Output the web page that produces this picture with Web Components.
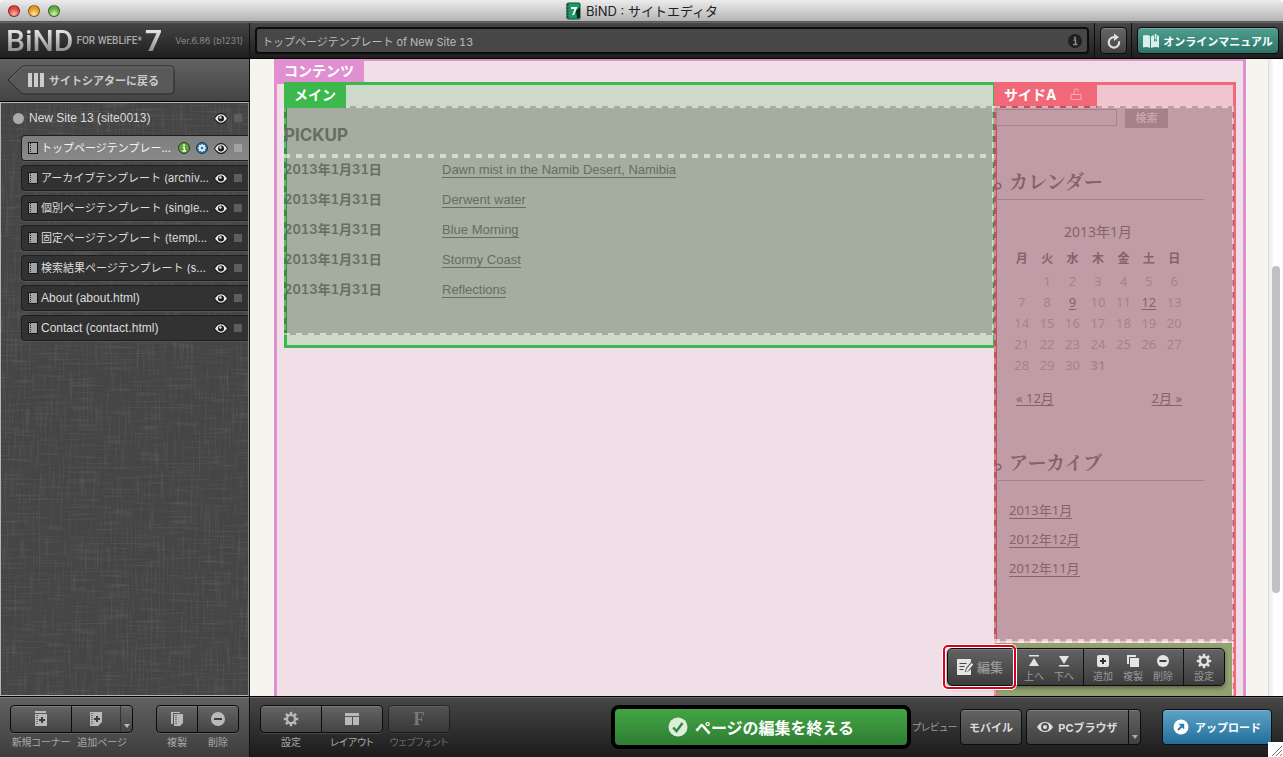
<!DOCTYPE html>
<html lang="ja">
<head>
<meta charset="utf-8">
<title>BiND : サイトエディタ</title>
<style>
  html, body { margin: 0; height: 100%; }
  body {
    font-family: Inter, "Noto Sans CJK JP", sans-serif;
    font-size: 11px;
    color: #ddd;
    background: #333;
    overflow: hidden;
  }
</style>
</head>
<body>
<site-editor></site-editor>

<script>
const RESET = `
  *, *::before, *::after { box-sizing: border-box; }
  :host { display: block; box-sizing: border-box; }
  :host([hidden]) { display: none; }
  button { font: inherit; color: inherit; margin: 0; padding: 0; border: 0; background: none; }
  a { color: inherit; text-decoration: none; }
  ul { list-style: none; margin: 0; padding: 0; }
  h1, h2, h3 { margin: 0; }
`;

function component(tag, css, html) {
  const template = document.createElement('template');
  template.innerHTML = `<style>${RESET}${css}</style>${html}`;
  customElements.define(tag, class extends HTMLElement {
    constructor() {
      super();
      this.attachShadow({ mode: 'open' }).append(template.content.cloneNode(true));
    }
  });
}

/* ---------- icons ---------- */
const gear = (cx, cy, r, hole) => {
  let teeth = '';
  for (let i = 0; i < 8; i++) {
    teeth += `<rect x="${cx - r * 0.17}" y="${cy - r}" width="${r * 0.34}" height="${r * 0.5}" transform="rotate(${i * 45} ${cx} ${cy})"/>`;
  }
  return `${teeth}<circle cx="${cx}" cy="${cy}" r="${(r * 0.72 + hole) / 2}" fill="none" stroke="currentColor" stroke-width="${r * 0.72 - hole}"/>`;
};

const ICONS = {
  book: [16, 18, `<rect x="2" y="1" width="13" height="16" rx="1" fill="#1d9a62" stroke="#0c5636"/><path d="M11 9l4-4v11h-3z" fill="#0a2a1b"/><path d="M1 3h3M1 6h3M1 9h3M1 12h3M1 15h3" stroke="#333" stroke-width="1.200"/><path d="M6 6h5l-3 7" fill="none" stroke="#fff" stroke-width="1.800"/>`],
  bars: [16, 14, `<rect width="4" height="14"/><rect x="6" width="4" height="14"/><rect x="12" width="4" height="14"/>`],
  page: [10, 12, `<rect x="0.500" y="0.500" width="9" height="11" fill="#a2a2a2" stroke="#161616"/><path d="M2.500 1v10" stroke="#1c1c1c" stroke-dasharray="1 1"/>`],
  eye: [14, 11, `<path d="M0 5.500C2.500 1 4.800 0 7 0s4.500 1 7 5.500C11.500 10 9.200 11 7 11S2.500 10 0 5.500z" fill="#1b1b1b"/><path d="M1 5.500C3.200 2.200 5 1.300 7 1.300s3.800.9 6 4.200C10.800 8.800 9 9.700 7 9.700S3.200 8.800 1 5.500z" fill="#e8e8e8"/><circle cx="7" cy="5.500" r="3" fill="#1b1b1b"/><circle cx="6.400" cy="4.500" r="1.200" fill="#e8e8e8"/>`],
  view: [16, 12, `<path d="M0 6C3 1.600 5.500 1 8 1s5 .6 8 5c-3 4.400-5.500 5-8 5S3 10.400 0 6z"/><circle cx="8" cy="6" r="3.900" fill="#4b4b4b"/><circle cx="8" cy="6" r="2.100"/>`],
  info: [12, 12, `<circle cx="6" cy="6" r="5.500" fill="#5fa33a" stroke="#28401a"/><path d="M4.700 5.300h1.700v3.500M4.500 9h3.500" fill="none" stroke="#fff" stroke-width="1.300"/><rect x="5.100" y="2.300" width="1.800" height="1.600" fill="#fff"/>`],
  globe: [12, 12, `<circle cx="6" cy="6" r="5.500" fill="#2f7aa6" stroke="#17384c"/><g color="#fff" fill="#fff">${gear(6, 6, 3.9, 1.5)}</g>`],
  about: [14, 14, `<circle cx="7" cy="7" r="7" fill="#1f1f1f"/><path d="M5.500 6h2v4.500M5 10.500h4.500" fill="none" stroke="#8a8a8a" stroke-width="1.500"/><rect x="6" y="2.800" width="2" height="1.900" fill="#8a8a8a"/>`],
  reload: [14, 16, `<path d="M12 8.200A5.200 5.200 0 1 1 7.500 4.200" fill="none" stroke="currentColor" stroke-width="2.200"/><path d="M7 .5l5 3.800L7 8z"/>`],
  manual: [16, 14, `<path d="M0 1.500c2.500-.8 5-.8 7 .5V14c-2-1.200-4.500-1.200-7-.4zM8 2.500C9 1.600 10 1.300 11 1.200V8l1.500-1.700L14 8V1.200c.8 0 1.400.3 2 .6v11.800c-2.500-.8-5-.8-8 .4z"/><path d="M11.700 0h1.700v6l-.9-1-.8 1z"/>`],
  lock: [12, 13, `<rect x="1" y="6.500" width="10" height="5" fill="none" stroke="currentColor"/><path d="M4 6V3a2 2 0 0 1 4-.5V4" fill="none" stroke="currentColor"/>`],
  corner: [14, 16, `<path d="M1 0h11v2H1z"/><path d="M1 3h12v12H1z"/><path d="M3 4v10" stroke="#333" stroke-dasharray="1 1"/><path d="M8 6v6M5 9h6" stroke="#3c3c3c" stroke-width="2"/>`],
  addpage: [14, 16, `<path d="M1 1h12v10l-4 4H1z"/><path d="M3 2v12" stroke="#333" stroke-dasharray="1 1"/><path d="M8 5v6M5 8h6" stroke="#3c3c3c" stroke-width="2"/>`],
  copy: [14, 16, `<path d="M1 1h9v1H3v11H1z"/><path d="M4 3h9v9l-3 3H4z"/><path d="M6 4v10" stroke="#333" stroke-dasharray="1 1"/>`],
  minus: [16, 16, `<circle cx="8" cy="8" r="7"/><path d="M4 8h8" stroke="#3c3c3c" stroke-width="2"/>`],
  remove: [12, 12, `<circle cx="6" cy="6" r="6"/><path d="M2.500 6h7" stroke="#3c3c3c" stroke-width="2"/>`],
  gear: [16, 16, gear(8, 8, 7.2, 2.9)],
  layout: [16, 14, `<path d="M1 1h14v3H1zM1 5h7v8H1zM9 5h6v8H9z"/>`],
  check: [20, 20, `<circle cx="10" cy="10" r="9.500"/><path d="M5.200 10.500l3.300 3.700L14.500 6" fill="none" stroke="#2f8a34" stroke-width="2.400"/>`],
  upload: [16, 16, `<circle cx="8" cy="8" r="7.500"/><path d="M5 11l4-4" stroke="#2f7dab" stroke-width="2.200"/><path d="M5.500 4.800h5.700v5.700z" fill="#2f7dab"/>`],
  caret: [6, 4, `<path d="M0 0h6L3 4z"/>`],
  edit: [16, 16, `<path d="M0 0h14v3l-5 6-1 4 4-1 2-2v6H0z"/><path d="M2.500 4.500h7M2.500 7.500h5M2.500 10.500h4" stroke="#444" stroke-width="1.200"/><path d="M9 13l.6-3.200 5-5.800 1.600 1.500-4.800 6z"/>`],
  up: [12, 12, `<path d="M1 0h10v1.500H1zM6 3l5 8H1z"/>`],
  down: [12, 12, `<path d="M1 10h10v1.500H1zM6 9l5-8H1z"/>`],
  plus: [12, 12, `<rect width="12" height="12" rx="2"/><path d="M6 3v6M3 6h6" stroke="#333" stroke-width="2"/>`],
  dup: [12, 12, `<path d="M0 0h9v2H2v7H0z"/><path d="M3 3h9v9H3z"/>`],
  grip: [15, 15, `<rect width="15" height="15" fill="#fff"/><path d="M4 14L14 4M8 14l6-6M12 14l2-2" stroke="#777"/>`],
  back: [168, 30, `<path d="M1 15L14 2.500Q15.500 1 18 1H163q4 0 4 4v20q0 4-4 4H18q-2.500 0-4-1.500z" fill="#595959" stroke="#262626"/><path d="M2.500 15L15 3Q16 2 18 2H163q3 0 3 3" fill="none" stroke="#707070"/>`],
};

customElements.define('ui-icon', class extends HTMLElement {
  constructor() {
    super();
    this.attachShadow({ mode: 'open' });
  }
  connectedCallback() {
    const [w, h, shape] = ICONS[this.getAttribute('name')];
    this.shadowRoot.innerHTML = `
      <style>:host{display:block;flex:none;width:${w}px;height:${h}px}svg{display:block}</style>
      <svg width="${w}" height="${h}" viewBox="0 0 ${w} ${h}" fill="currentColor" aria-hidden="true">${shape}</svg>`;
  }
});

/* ---------- window title ---------- */
component('title-bar', `
  :host {
    height: 22px; display: flex; align-items: center; justify-content: center; gap: 5px;
    position: relative; color: #222; font-size: 13px;
    background: linear-gradient(#ececec, #b4b4b4); border-bottom: 1px solid #555;
    border-radius: 4px 4px 0 0;
  }
  .lights { position: absolute; left: 8px; top: 5px; display: flex; gap: 8px; }
  i { width: 12px; height: 12px; border-radius: 50%; border: 1px solid rgba(0,0,0,.45); }
  .r { background: radial-gradient(circle at 50% 80%, #ffb6ae, #e0443e 60%); }
  .y { background: radial-gradient(circle at 50% 80%, #ffeaa0, #e59a24 60%); }
  .g { background: radial-gradient(circle at 50% 80%, #d3f5b0, #61ab3f 60%); }
  h1 { font-size: 13px; font-weight: 400; line-height: 20px; }
`, `
  <div class="lights"><i class="r"></i><i class="y"></i><i class="g"></i></div>
  <ui-icon name="book"></ui-icon>
  <h1><slot></slot></h1>
`);

/* ---------- top bar ---------- */
component('brand-logo', `
  :host {
    display: flex; align-items: center; padding: 0 6px; font-family: Roboto, sans-serif;
    width: 250px; flex: none; border-right: 1px solid #111; white-space: nowrap;
  }
  .big {
    font-size: 30px; font-weight: 500; line-height: 36px;
    background: linear-gradient(#e6e6e6 20%, #8d8d8d 80%); background-clip: text; -webkit-background-clip: text; color: transparent;
  }
  .seven { font-weight: 700; }
  .sub { font-size: 10px; font-weight: 500; color: #aaa; margin: 0 3px; }
  .ver { font-family: Inter, sans-serif; font-size: 9px; color: #888; margin-left: auto; }
`, `
  <span class="big">BiND</span><span class="sub">FOR WEBLiFE*</span><span class="big seven">7</span>
  <span class="ver"><slot></slot></span>
`);

component('top-bar', `
  :host {
    display: flex; height: 37px; flex: none;
    background: linear-gradient(#454545, #1e1e1e); border-top: 1px solid #666; border-bottom: 1px solid #000;
  }
  .address {
    flex: 1; display: flex; align-items: center; margin: 4px 5px; padding: 0 5px;
    background: #474747; border: 2px solid #0c0c0c; border-radius: 4px; color: #bbb;
  }
  input { flex: 1; border: 0; padding: 0; background: none; font: inherit; color: inherit; outline: 0; }
  .address input { font-feature-settings: "tnum"; }
  .cell { border-left: 1px solid #0c0c0c; padding: 4px 4px 4px 5px; display: flex; }
  .cell button {
    display: flex; align-items: center; justify-content: center; height: 27px;
    border: 1px solid #0c0c0c; border-radius: 4px; background: linear-gradient(#666, #424242);
    box-shadow: inset 0 1px 0 rgba(255,255,255,.2);
  }
  .reload { width: 27px; }
  .cell .manual {
    gap: 4px; width: 142px; font-weight: 700; color: #fff; background: linear-gradient(#4f9f90, #2b7567);
    white-space: nowrap;
  }
  .manual ui-icon { color: #d9efe9; }
`, `
  <brand-logo>Ver.6.86 (b1231)</brand-logo>
  <div class="address">
    <input type="text" aria-label="ページ" value="トップページテンプレート of New Site 13" readonly>
    <ui-icon name="about"></ui-icon>
  </div>
  <div class="cell"><button class="reload" aria-label="再読み込み"><ui-icon name="reload"></ui-icon></button></div>
  <div class="cell"><button class="manual"><ui-icon name="manual"></ui-icon>オンラインマニュアル</button></div>
`);

/* ---------- side panel ---------- */
component('page-row', `
  :host {
    display: flex; align-items: center; height: 26px; gap: 5px; margin: 0 0 4px 20px; padding: 0 6px 0 6px;
    background: #323232; border: 1px solid #1f1f1f; border-right: 0; border-radius: 4px 0 0 4px;
    box-shadow: 0 1px 0 #555; white-space: nowrap;
  }
  :host([selected]) { background: linear-gradient(#7d7d7d, #898989); color: #f4f4f4; }
  :host([root]) { background: none; border-color: transparent; box-shadow: none; margin-left: 5px; }
  :host([latin]) { font: 12px "Liberation Sans", sans-serif; }
  a { flex: 1; min-width: 0; line-height: 20px; margin-left: -2px; }
  .dot { width: 11px; height: 11px; border-radius: 50%; background: #aaa; display: none; margin-right: 2px; }
  :host([root]) .dot { display: block; }
  :host([root]) .page, .badge { display: none; }
  :host([selected]) .badge { display: block; }
  .badge { margin-right: 1px; }
  .sq { width: 8px; height: 8px; background: #5e5e5e; margin-left: 1px; }
  :host([selected]) .sq { background: #a2a2a2; }
`, `
  <span class="dot"></span><ui-icon class="page" name="page"></ui-icon>
  <a href="#"><slot></slot></a>
  <ui-icon class="badge" name="info"></ui-icon><ui-icon class="badge" name="globe"></ui-icon>
  <ui-icon name="eye"></ui-icon><span class="sq"></span>
`);

component('side-panel', `
  :host { display: flex; flex-direction: column; width: 250px; flex: none; border-right: 1px solid #111; }
  .back { height: 43px; flex: none; padding: 6px 7px; background: linear-gradient(#626262, #444); border-bottom: 1px solid #000; }
  .back button { display: grid; width: 168px; height: 30px; align-items: center; }
  .back button > * { grid-area: 1 / 1; }
  .back span { display: flex; align-items: center; gap: 5px; padding-left: 21px; font-weight: 700; color: #ccc; position: relative; white-space: nowrap; }
  .tree { flex: 1; min-height: 0; position: relative; border: 1px solid #b5b5b5; border-right-color: #888; background: #454545; overflow: hidden; padding-top: 2px; }
  .weave { position: absolute; inset: 0; width: 100%; height: 100%; }
  .rows { position: relative; }
`, `
  <div class="back"><button><ui-icon name="back"></ui-icon><span><ui-icon name="bars"></ui-icon>サイトシアターに戻る</span></button></div>
  <div class="tree">
    <svg class="weave" aria-hidden="true">
      <filter id="h"><feTurbulence type="fractalNoise" baseFrequency="0.03 0.5" numOctaves="2" seed="4"/><feColorMatrix values="0 0 0 0 1  0 0 0 0 1  0 0 0 0 1  1 0 0 0 -.5"/></filter>
      <filter id="v"><feTurbulence type="fractalNoise" baseFrequency="0.5 0.03" numOctaves="2" seed="9"/><feColorMatrix values="0 0 0 0 1  0 0 0 0 1  0 0 0 0 1  1 0 0 0 -.5"/></filter>
      <rect width="100%" height="100%" filter="url(#h)" opacity=".2"/><rect width="100%" height="100%" filter="url(#v)" opacity=".2"/>
    </svg>
    <div class="rows"><slot></slot></div>
  </div>
`);

/* ---------- regions and blocks on the canvas ---------- */
component('edit-region', `
  :host { background: var(--fill); box-shadow: inset 0 0 0 3px var(--line); }
  .label {
    display: inline-flex; align-items: center; gap: 14px; height: 26px; padding: 0 10px 2px; vertical-align: top;
    background: var(--line); color: #fff; font-size: 14px; font-weight: 700; white-space: nowrap;
  }
  :host([kind=content]) { --line: #e08fd0; --fill: #f1dfe8; display: flex; flex-direction: column; }
  :host([kind=main]) { --line: #3cb84c; --fill: #cdd9c9; padding-bottom: 13px; }
  :host([kind=side]) { --line: #f16878; --fill: #f1c5d0; display: flex; flex-direction: column; align-items: stretch; }
  :host([kind=side]) .label { align-self: flex-start; padding-right: 15px; flex: none; }
  .body { margin-top: -2px; }
  :host([kind=side]) .body { flex: 1; display: flex; flex-direction: column; }
  :host([kind=content]) .label { align-self: flex-start; flex: none; }
  :host([kind=content]) .body { flex: 1; display: flex; padding: 0 10px; }
  ::slotted(ui-icon) { color: #f9a9b2; }
`, `
  <div class="label"><slot name="label"></slot></div>
  <div class="body"><slot></slot></div>
`);

component('edit-block', `
  :host {
    --dash: rgba(255,255,255,.54) 0 6px, transparent 6px 12px;
    --dash-down: rgba(255,255,255,.3) 0 6px, transparent 6px 12px;
    margin-right: 2px; overflow: hidden;
    background:
      repeating-linear-gradient(90deg, var(--dash)) 0 0 / 100% 2px no-repeat,
      repeating-linear-gradient(90deg, var(--dash)) 0 100% / 100% 2px no-repeat,
      repeating-linear-gradient(180deg, var(--dash-down)) 0 0 / 2px 100% no-repeat,
      repeating-linear-gradient(180deg, var(--dash)) 100% 0 / 2px 100% no-repeat,
      rgba(0,0,0,.2);
    font-size: 13px;
  }
  :host([active]) {
    flex: 1;
    background:
      repeating-linear-gradient(90deg, var(--dash)) 0 0 / 100% 2px no-repeat,
      repeating-linear-gradient(180deg, var(--dash-down)) 0 0 / 2px 100% no-repeat,
      repeating-linear-gradient(180deg, var(--dash)) 100% 0 / 2px 100% no-repeat,
      linear-gradient(#93a271, #93a271) 3px 2px / calc(100% - 5px) 100% no-repeat;
  }
`, `<slot></slot>`);

component('pickup-heading', `
  :host { padding: 17px 0 9px; color: #656e62; }
  h2 { font-size: 17px; line-height: 24px; font-weight: 700; }
`, `<h2><slot></slot></h2>`);

component('pickup-list', `
  :host { padding-bottom: 29px; color: #656e62; }
  li { display: flex; height: 30px; align-items: flex-start; line-height: 28px; white-space: nowrap; }
  time { width: 158px; font-weight: 600; font-feature-settings: "tnum"; line-height: 26px; }
  a { font-family: "Liberation Sans", sans-serif; line-height: 15px; margin-top: 6px; border-bottom: 1px solid; }
`, `
  <ul>
    <li><time datetime="2013-01-31">2013年1月31日</time><a href="#">Dawn mist in the Namib Desert, Namibia</a></li>
    <li><time datetime="2013-01-31">2013年1月31日</time><a href="#">Derwent water</a></li>
    <li><time datetime="2013-01-31">2013年1月31日</time><a href="#">Blue Morning</a></li>
    <li><time datetime="2013-01-31">2013年1月31日</time><a href="#">Stormy Coast</a></li>
    <li><time datetime="2013-01-31">2013年1月31日</time><a href="#">Reflections</a></li>
  </ul>
`);

component('search-form', `
  form { display: flex; align-items: flex-start; gap: 8px; margin: 0; padding: 3px 0 0 2px; }
  input { width: 121px; height: 17px; padding: 0; background: transparent; border: 1px solid #a9838c; border-radius: 0; outline: 0; }
  button { width: 43px; height: 19px; background: #a5828a; color: #c8a5ad; font-size: 11px; font-weight: 700; line-height: 19px; }
`, `<form><input type="text" aria-label="検索語"><button type="button">検索</button></form>`);

component('side-heading', `
  :host { padding: 0 30px 0 2px; color: #86626a; }
  h3 {
    font: 700 19px/24px "Noto Serif CJK JP", "Noto Sans CJK JP", serif; padding: 0 0 6px 13px;
    border-bottom: 1px solid #a5828a; background: radial-gradient(circle at 2px 17px, transparent 2px, #86626a 2px 3px, transparent 4px);
  }
`, `<h3><slot></slot></h3>`);

customElements.define('month-calendar', class extends HTMLElement {
  constructor() {
    super();
    const days = ['', ...Array.from({ length: 31 }, (_, i) => i + 1)];
    const cell = d => d === 9 || d === 12 ? `<td><a href="#">${d}</a></td>` : d === 31 ? `<td><b>${d}</b></td>` : `<td>${d}</td>`;
    let rows = '';
    for (let i = 0; i < days.length; i += 7) rows += `<tr>${days.slice(i, i + 7).map(cell).join('')}</tr>`;
    this.attachShadow({ mode: 'open' }).innerHTML = `
      <style>${RESET}
        :host { padding-left: 15px; width: 193px; color: #86626a; font-family: "Noto Sans", "Noto Sans CJK JP", sans-serif; }
        table { width: 178px; table-layout: fixed; border-collapse: collapse; font-size: 13px; }
        caption { line-height: 20px; padding: 0 0 4px; font-size: 14px; }
        th { height: 24px; padding: 0; font-size: 12px; font-weight: 700; }
        td { height: 21px; padding: 0; text-align: center; color: #a5828a; line-height: 20px; }
        td a, nav a { color: #86626a; text-decoration: underline; text-underline-offset: 2px; }
        b { font-weight: 600; }
        nav { display: flex; justify-content: space-between; margin-top: 13px; padding: 0 5px 0 7px; line-height: 20px; }
      </style>
      <table>
        <caption>2013年1月</caption>
        <thead><tr>${[...'月火水木金土日'].map(d => `<th scope="col">${d}</th>`).join('')}</tr></thead>
        <tbody>${rows}</tbody>
      </table>
      <nav><a href="#">« 12月</a><a href="#">2月 »</a></nav>`;
  }
});

component('archive-list', `
  :host { padding-left: 15px; color: #86626a; font-family: "Noto Sans", "Noto Sans CJK JP", sans-serif; }
  li { height: 29px; }
  a { display: inline-block; line-height: 15px; margin-top: 7px; border-bottom: 1px solid; vertical-align: top; }
`, `<ul><li><a href="#">2013年1月</a></li><li><a href="#">2012年12月</a></li><li><a href="#">2012年11月</a></li></ul>`);

component('side-content', `
  :host { padding-bottom: 58px; }
  .first { margin-top: 41px; } month-calendar { margin-top: 22px; }
  .second { margin-top: 42px; } archive-list { margin-top: 15px; }
`, `
  <search-form></search-form>
  <side-heading class="first">カレンダー</side-heading><month-calendar></month-calendar>
  <side-heading class="second">アーカイブ</side-heading><archive-list></archive-list>
`);

component('block-tools', `
  :host {
    position: absolute; right: 58px; bottom: 10px; display: flex; height: 38px;
    background: linear-gradient(#636363, #3c3c3c); border: 1px solid #0c0c0c; border-radius: 5px; color: #e4e4e4;
    box-shadow: 0 2px 4px rgba(0,0,0,.4), inset 0 1px 0 rgba(255,255,255,.15);
  }
  .set { display: flex; border-right: 1px solid #111; }
  .set:last-child { border: 0; }
  button { display: flex; flex-direction: column; align-items: center; justify-content: flex-end; gap: 2px; width: 30px; padding-bottom: 2px; }
  button span { font-size: 10px; line-height: 14px; color: #999; font-feature-settings: "palt"; }
  .edit button { flex-direction: row; justify-content: center; align-items: center; gap: 4px; width: 66px; padding: 0 2px 0 0; }
  .edit button span { font-size: 13px; color: #999; font-weight: 500; }
  .edit { position: relative; }
  .edit::after {
    content: ""; position: absolute; inset: -4px -2px -4px -5px; border: 2px solid #d8001d; border-radius: 5px;
    box-shadow: 0 0 0 1px #fff, inset 0 0 0 1px #fff;
  }
  .move { padding: 0 4px; } .ops { padding: 0 5px 0 4px; } .conf { padding: 0 5px; }
  .conf button { gap: 0; }
`, `
  <div class="set edit"><button><ui-icon name="edit"></ui-icon><span>編集</span></button></div>
  <div class="set move"><button><ui-icon name="up"></ui-icon><span>上へ</span></button><button><ui-icon name="down"></ui-icon><span>下へ</span></button></div>
  <div class="set ops"><button><ui-icon name="plus"></ui-icon><span>追加</span></button><button><ui-icon name="dup"></ui-icon><span>複製</span></button><button><ui-icon name="remove"></ui-icon><span>削除</span></button></div>
  <div class="set conf"><button><ui-icon name="gear"></ui-icon><span>設定</span></button></div>
`);

component('page-canvas', `
  :host { flex: 1; min-width: 0; display: flex; position: relative; overflow: hidden; background: #f7f3ee; }
  .page { flex: 1; min-width: 0; padding: 0 22px 0 24px; margin: -1px 0 -8px; display: flex; }
  .page > edit-region { flex: 1; min-width: 0; }
  .main { flex: 1; min-width: 0; align-self: flex-start; }
  .side { width: 242px; flex: none; margin-left: -2px; }
  .track { width: 15px; flex: none; background: linear-gradient(90deg, #ececec, #fff 40%, #fafafa); border-left: 1px solid #dedede; display: flex; flex-direction: column; }
  .track::before { content: ""; flex: 207; }
  .thumb { flex: 327; width: 8px; margin-left: 3px; border-radius: 4px; background: #c1c1c1; }
  .track::after { content: ""; flex: 103; }
`, `
  <div class="page">
    <edit-region kind="content"><span slot="label">コンテンツ</span>
      <edit-region class="main" kind="main"><span slot="label">メイン</span>
        <edit-block><pickup-heading>PICKUP</pickup-heading></edit-block>
        <edit-block><pickup-list></pickup-list></edit-block>
      </edit-region>
      <edit-region class="side" kind="side"><span slot="label">サイドA</span><ui-icon slot="label" name="lock"></ui-icon>
        <edit-block><side-content></side-content></edit-block>
        <edit-block active></edit-block>
      </edit-region>
    </edit-region>
  </div>
  <div class="track"><div class="thumb"></div></div>
  <block-tools></block-tools>
`);

/* ---------- bottom bar ---------- */
customElements.define('labelled-tool', class extends HTMLElement {
  constructor() {
    super();
    this.attachShadow({ mode: 'open' });
  }
  connectedCallback() {
    const menu = this.hasAttribute('menu') ? `<button class="menu" aria-label="メニュー"><ui-icon name="caret"></ui-icon></button>` : '';
    const face = this.hasAttribute('icon') ? `<ui-icon name="${this.getAttribute('icon')}"></ui-icon>` : `<span class="glyph">F</span>`;
    this.shadowRoot.innerHTML = `
      <style>${RESET}
        :host { width: 62px; margin-right: -1px; color: #b9b9b9; }
        :host([narrow]) { width: 42px; }
        .keys {
          display: flex; height: 28px; border: 1px solid #0c0c0c; overflow: hidden;
          background: linear-gradient(#656565, #434343); box-shadow: inset 0 1px 0 rgba(255,255,255,.15), 0 1px 0 rgba(255,255,255,.12);
        }
        :host([first]) .keys { border-radius: 4px 0 0 4px; }
        :host([last]) .keys { border-radius: 0 4px 4px 0; }
        :host([first][last]) .keys { border-radius: 4px; }
        :host([disabled]) { opacity: .5; }
        .key { flex: 1; display: flex; align-items: center; justify-content: center; }
        .menu { width: 12px; border-left: 1px solid #333; display: flex; align-items: flex-end; justify-content: center; padding-bottom: 4px; }
        .glyph { font: 700 18px/24px "Liberation Serif", serif; }
        label { display: flex; justify-content: center; margin-top: 2px; font-size: 10px; line-height: 14px; font-feature-settings: "palt"; white-space: nowrap; color: #aaa; }
      </style>
      <div class="keys"><button class="key" id="key">${face}</button>${menu}</div>
      <label for="key"><slot></slot></label>`;
  }
});

component('bottom-bar', `
  :host { display: flex; height: 61px; flex: none; position: relative; }
  .left, .right { display: flex; align-items: flex-start; border-top: 1px solid #000; box-shadow: inset 0 1px 0 rgba(255,255,255,.2); padding-top: 8px; }
  .left { width: 250px; flex: none; padding-left: 10px; background: linear-gradient(#616161, #3d3d3d); border-right: 1px solid #111; }
  .right { flex: 1; padding-left: 10px; padding-right: 11px; background: linear-gradient(#474747, #1b1b1b); }
  .group { display: flex; margin-right: 6px; }
  .left .group { margin-right: 24px; }
  .finish {
    display: flex; align-items: center; justify-content: center; gap: 7px; width: 300px; height: 44px; margin-left: auto;
    border: 4px solid #000; border-radius: 8px; background: linear-gradient(#43a543, #2f7d33); color: #fff; font-size: 16px; font-weight: 700; white-space: nowrap;
  }
  .finish ui-icon { color: #dcefdc; }
  .caption { width: 49px; padding-left: 1px; margin-top: 14px; font-size: 10px; line-height: 16px; color: #999; font-feature-settings: "palt"; white-space: nowrap; }
  .btn {
    display: flex; align-items: center; justify-content: center; gap: 6px; height: 36px; margin-top: 4px; white-space: nowrap;
    border: 1px solid #0c0c0c; border-radius: 4px; background: linear-gradient(#636363, #404040); color: #ddd;
    font-size: 11px; font-weight: 700; box-shadow: inset 0 1px 0 rgba(255,255,255,.18);
  }
  .mobile { width: 62px; margin-right: 4px; }
  .pc { width: 103px; border-radius: 4px 0 0 4px; gap: 5px; }
  .more { width: 13px; margin-left: -1px; border-radius: 0 4px 4px 0; align-items: flex-end; padding-bottom: 5px; color: #aaa; }
  .upload { width: 110px; margin-left: 21px; background: linear-gradient(#5ea3c6, #226f9c); color: #fff; }
  .grip { position: absolute; right: 0; bottom: 0; }
`, `
  <div class="left">
    <div class="group"><labelled-tool first icon="corner">新規コーナー</labelled-tool><labelled-tool last menu icon="addpage">追加ページ</labelled-tool></div>
    <div class="group"><labelled-tool first narrow icon="copy">複製</labelled-tool><labelled-tool last narrow icon="minus">削除</labelled-tool></div>
  </div>
  <div class="right">
    <div class="group"><labelled-tool first icon="gear">設定</labelled-tool><labelled-tool last icon="layout">レイアウト</labelled-tool></div>
    <div class="group"><labelled-tool first last disabled>ウェブフォント</labelled-tool></div>
    <button class="finish"><ui-icon name="check"></ui-icon>ページの編集を終える</button>
    <span class="caption">プレビュー</span>
    <button class="btn mobile">モバイル</button>
    <button class="btn pc"><ui-icon name="view"></ui-icon>PCブラウザ</button>
    <button class="btn more" aria-label="ブラウザを選ぶ"><ui-icon name="caret"></ui-icon></button>
    <button class="btn upload"><ui-icon name="upload"></ui-icon>アップロード</button>
  </div>
  <ui-icon class="grip" name="grip"></ui-icon>
`);

/* ---------- whole window ---------- */
component('site-editor', `
  :host { display: flex; flex-direction: column; height: 100vh; background: #fff; }
  .work { flex: 1; min-height: 0; display: flex; }
`, `
  <title-bar>BiND : サイトエディタ</title-bar>
  <top-bar></top-bar>
  <div class="work">
    <side-panel>
      <page-row root latin>New Site 13 (site0013)</page-row>
      <page-row selected>トップページテンプレー...</page-row>
      <page-row>アーカイブテンプレート (archiv...</page-row>
      <page-row>個別ページテンプレート (single...</page-row>
      <page-row>固定ページテンプレート (templ...</page-row>
      <page-row>検索結果ページテンプレート (s...</page-row>
      <page-row latin>About (about.html)</page-row>
      <page-row latin>Contact (contact.html)</page-row>
    </side-panel>
    <page-canvas></page-canvas>
  </div>
  <bottom-bar></bottom-bar>
`);
</script>
</body>
</html>
